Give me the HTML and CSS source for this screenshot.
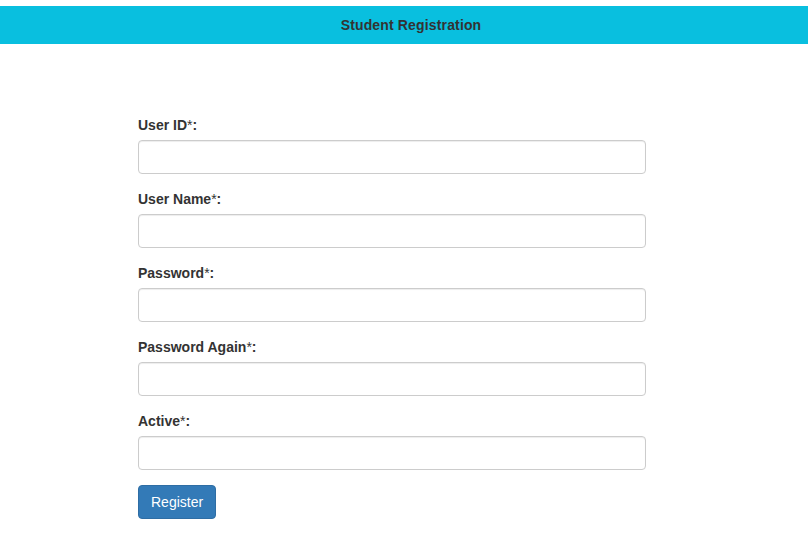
FILE: index.html
```html
<!DOCTYPE html>
<html>
<head>
<meta charset="utf-8">
<link rel="stylesheet" href="styles.css">
</head>
<body>
<div class="header">Student Registration</div>
<form class="form">
  <div class="group">
    <label class="label">User ID<span class="req">*</span>:</label>
    <input class="control" type="text">
  </div>
  <div class="group">
    <label class="label">User Name<span class="req">*</span>:</label>
    <input class="control" type="text">
  </div>
  <div class="group">
    <label class="label">Password<span class="req">*</span>:</label>
    <input class="control" type="password">
  </div>
  <div class="group">
    <label class="label">Password Again<span class="req">*</span>:</label>
    <input class="control" type="password">
  </div>
  <div class="group">
    <label class="label">Active<span class="req">*</span>:</label>
    <input class="control" type="text">
  </div>
  <button class="btn" type="button">Register</button>
</form>
</body>
</html>
```
FILE: styles.css
```css
html, body {
  margin: 0;
  padding: 0;
  background: #fff;
  font-family: "Liberation Sans", Arial, sans-serif;
  font-size: 14px;
  color: #333;
}
body {
  padding-top: 6px;
}
.header {
  background: #09bfdf;
  height: 38px;
  line-height: 38px;
  padding-left: 14px;
  text-align: center;
  font-weight: bold;
  font-size: 14px;
  letter-spacing: 0.15px;
  color: #333;
}
.form {
  width: 508px;
  margin: 71px 0 0 138px;
}
.group {
  margin-bottom: 15px;
}
.label {
  display: block;
  font-weight: bold;
  line-height: 20px;
  margin-bottom: 5px;
}
.req {
  font-weight: normal;
}
.control {
  display: block;
  box-sizing: border-box;
  width: 100%;
  height: 34px;
  margin: 0;
  padding: 6px 12px;
  border: 1px solid #ccc;
  border-radius: 4px;
  box-shadow: inset 0 1px 1px rgba(0,0,0,.075);
  background: #fff;
  font-family: inherit;
  font-size: 14px;
}
.btn {
  display: block;
  box-sizing: border-box;
  height: 34px;
  padding: 6px 12px;
  margin: 0;
  background: #337ab7;
  border: 1px solid #2e6da4;
  border-radius: 4px;
  color: #fff;
  font-family: inherit;
  font-size: 14px;
  line-height: 20px;
}
```
